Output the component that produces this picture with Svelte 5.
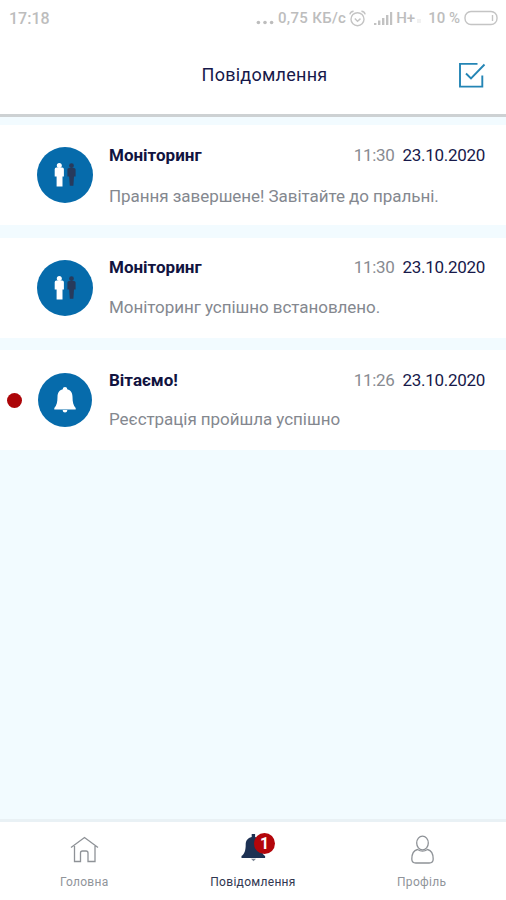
<script>
  const notifications = [
    { icon: 'people', title: 'Моніторинг', time: '11:30', date: '23.10.2020', text: 'Прання завершене! Завітайте до пральні.', unread: false },
    { icon: 'people', title: 'Моніторинг', time: '11:30', date: '23.10.2020', text: 'Моніторинг успішно встановлено.', unread: false },
    { icon: 'bell', title: 'Вітаємо!', time: '11:26', date: '23.10.2020', text: 'Реєстрація пройшла успішно', unread: true }
  ];

  let active = $state('notifications');
  let unreadCount = $derived(notifications.filter((n) => n.unread).length);
</script>

<div class="screen">
  <div class="status">
    <span class="clock">17:18</span>
    <div class="status-right">
      <svg class="dots" width="18" height="5" viewBox="0 0 18 5">
        <circle cx="2.4" cy="2.5" r="1.8" />
        <circle cx="9" cy="2.5" r="1.8" />
        <circle cx="15.6" cy="2.5" r="1.8" />
      </svg>
      <span class="speed">0,75 КБ/с</span>
      <svg class="alarm" width="17" height="17" viewBox="0 0 17 17">
        <circle cx="8.5" cy="9.2" r="6.5" />
        <path d="M.8 4.4Q1.500 1.500 4.600 1.300M16.200 4.400Q15.500 1.500 12.400 1.300M5.800 8.600l2.700 2.600 3-2.600" />
      </svg>
      <svg class="signal" width="20" height="15" viewBox="0 0 20 15">
        <path d="M1 12h2.400v2H1zM5 9.500h2.400V14H5zM9 7h2.400v7H9zM13 4h2.400v10H13zM17 1h2.200v13H17z" />
      </svg>
      <span class="network">H+</span>
      <span class="faint"></span>
      <span class="percent">10 %</span>
      <svg class="battery" width="34" height="16" viewBox="0 0 34 16">
        <rect x="1" y="1.5" width="32" height="13" rx="6" />
        <path d="M28.500 5v6" />
      </svg>
    </div>
  </div>

  <header>
    <h1>Повідомлення</h1>
    <button class="read-all" aria-label="Позначити все прочитаним">
      <svg width="28" height="26" viewBox="0 0 28 26">
        <path d="M19.500 1.900H2v22.700h22.300V13.500" />
        <path d="m8 11.500 5 5L26.500 2.500" />
      </svg>
    </button>
  </header>

  <main>
    {#each notifications as item}
      <article>
        <div class="marker">
          {#if item.unread}<span class="unread"></span>{/if}
        </div>
        <div class="avatar" class:small={item.icon === 'bell'}>
          {#if item.icon === 'people'}
            <svg width="24" height="26" viewBox="0 0 24 26">
              <g fill="#fff">
                <circle cx="6.3" cy="3.4" r="2.500" />
                <path d="M3.300 5.600h6q1.600 0 1.600 1.600v7.400H9.500v9.800H3.600v-9.800H1.700V7.200q0-1.600 1.600-1.600z" />
              </g>
              <g fill="#273a5c">
                <circle cx="18.500" cy="3.700" r="2.400" />
                <path d="M16 5.900h5q1.600 0 1.600 1.600v6.900H21l-.6 9.400h-3.600l-.7-9.400h-1.700V7.500q0-1.600 1.600-1.600z" />
              </g>
            </svg>
          {:else}
            <svg width="24" height="28" viewBox="0 0 24 28">
              <path fill="#fff" d="M12 1c1.300 0 2.200.9 2.200 2.300 3.700.9 5.300 3.800 5.300 7.500 0 5.500.9 8.700 3.200 11.200v1.600H1.300V22c2.300-2.500 3.200-5.700 3.200-11.200 0-3.700 1.600-6.600 5.300-7.500C9.800 1.900 10.700 1 12 1zM9.700 24.100h4.600c0 1.700-1 2.500-2.300 2.500s-2.300-.8-2.300-2.500z" />
            </svg>
          {/if}
        </div>
        <div class="body">
          <div class="line">
            <h2>{item.title}</h2>
            <span class="time">{item.time}</span>
            <span class="date">{item.date}</span>
          </div>
          <p>{item.text}</p>
        </div>
      </article>
    {/each}
  </main>

  <nav>
    <button class:active={active === 'home'} onclick={() => (active = 'home')}>
      <span class="nav-icon">
        <svg width="30" height="30" viewBox="0 0 30 30">
          <path d="M2 13.500 15.500 3.500 29 13.500M5.500 12v15.500h6V19q0-2 2-2h3.500q2 0 2 2v8.500h7V12" />
        </svg>
      </span>
      <span class="label">Головна</span>
    </button>
    <button class:active={active === 'notifications'} onclick={() => (active = 'notifications')}>
      <span class="nav-icon">
        <svg width="30" height="30" viewBox="0 0 30 30">
          <path class="solid" d="M13.700 0h3.400v3c4.200 1 6 4 6 7.500 0 6 1 9.500 4 11.500v2H3.500v-2c3-2 4.200-5.500 4.200-11.500 0-3.500 1.800-6.500 6-7.500z" />
          <path class="clapper" d="M13 24.700h5l-2.500 2.600z" />
        </svg>
        {#if unreadCount}<span class="badge">{unreadCount}</span>{/if}
      </span>
      <span class="label">Повідомлення</span>
    </button>
    <button class:active={active === 'profile'} onclick={() => (active = 'profile')}>
      <span class="nav-icon">
        <svg width="30" height="30" viewBox="0 0 30 30">
          <ellipse cx="15.500" cy="9" rx="5.800" ry="6.800" />
          <path d="M10.500 15.500C6.500 16.500 4.800 20 4.800 25q0 4 4 4h13.400q4 0 4-4c0-5-1.700-8.500-5.700-9.500-3 2-7 2-10 0z" />
        </svg>
      </span>
      <span class="label">Профіль</span>
    </button>
  </nav>
</div>

<style>
  :global(body) {
    margin: 0;
    background: #fff;
  }

  .screen {
    display: flex;
    flex-direction: column;
    height: 900px;
    background: #f2fbff;
    font-family: Roboto, 'Noto Sans', sans-serif;
    color: #17194a;
  }

  button {
    padding: 0;
    border: 0;
    background: none;
    font: inherit;
    cursor: pointer;
  }

  svg {
    display: block;
  }

  .status {
    display: flex;
    justify-content: space-between;
    align-items: center;
    height: 36px;
    padding: 0 8px 0 9px;
    background: #fff;
    color: #bdbdbd;
    font-size: 15px;
    font-weight: 500;
  }

  .clock {
    font-size: 16px;
  }

  .status-right {
    display: flex;
    align-items: center;
  }

  .dots {
    margin: 8px 4px 0 0;
    fill: #bdbdbd;
  }

  .speed {
    letter-spacing: 0.3px;
  }

  .alarm,
  .battery {
    fill: none;
    stroke: #c4c4c4;
    stroke-width: 1.4;
  }

  .alarm {
    margin: 0 7px 0 3px;
  }

  .signal {
    margin-right: 3px;
    fill: #c2c2c2;
  }

  .faint {
    width: 4px;
    height: 4px;
    margin: 5px 7px 0 2px;
    background: #f1f1f1;
  }

  .battery {
    margin-left: 4px;
  }

  header {
    display: grid;
    grid-template-columns: 1fr auto 1fr;
    align-items: center;
    height: 81px;
    padding: 0 20px 0 43px;
    background: #fff;
    border-bottom: 3px solid #cdd1d3;
    box-sizing: border-box;
  }

  h1 {
    grid-column: 2;
    margin: 0 0 2px;
    font-size: 18px;
    font-weight: 400;
    letter-spacing: 0.25px;
  }

  .read-all {
    justify-self: end;
  }

  .read-all svg {
    fill: none;
    stroke: #2485b5;
    stroke-width: 1.9;
  }

  main {
    flex: 1;
    display: flex;
    flex-direction: column;
    gap: 12.500px;
    padding-top: 8px;
  }

  article {
    display: flex;
    height: 100px;
    background: #fff;
  }

  .marker {
    display: flex;
    align-items: center;
    width: 37px;
    padding-left: 7px;
    box-sizing: border-box;
  }

  .unread {
    width: 15px;
    height: 15px;
    border-radius: 50%;
    background: #ac0508;
  }

  .avatar {
    display: flex;
    align-items: center;
    justify-content: center;
    align-self: center;
    width: 56px;
    height: 56px;
    border-radius: 50%;
    background: #066bab;
  }

  .avatar.small {
    width: 54px;
    height: 54px;
    margin: 0 1px;
  }

  .body {
    flex: 1;
    padding: 20px 21px 0 16px;
  }

  .line {
    display: flex;
    align-items: center;
    height: 20px;
    font-size: 17px;
    letter-spacing: -0.3px;
  }

  h2 {
    flex: 1;
    margin: 0;
    font-size: 17px;
    font-weight: 700;
    letter-spacing: 0;
    color: #111340;
  }

  .time {
    margin-right: 8px;
    color: #888b91;
  }

  p {
    margin: 21px 0 0;
    font-size: 17px;
    line-height: 20px;
    letter-spacing: -0.05px;
    color: #84888f;
  }

  article + article .body {
    padding-top: 19.500px;
  }

  article + article p {
    margin-top: 19.500px;
  }

  nav {
    display: grid;
    grid-template-columns: repeat(3, 1fr);
    height: 81px;
    box-sizing: border-box;
    border-top: 3px solid #e9f1f5;
    background: #fff;
  }

  nav button {
    display: flex;
    flex-direction: column;
    align-items: center;
    padding-top: 12px;
    color: #90949a;
  }

  nav button.active {
    color: #303650;
  }

  .nav-icon {
    position: relative;
  }

  .nav-icon svg {
    fill: none;
    stroke: #8e9297;
    stroke-width: 1.3;
  }

  .nav-icon .solid {
    fill: #1d3153;
    stroke: none;
  }

  .nav-icon .clapper {
    fill: #7f8997;
    stroke: none;
  }

  .badge {
    position: absolute;
    top: -1px;
    left: 16px;
    width: 21px;
    height: 21px;
    border-radius: 50%;
    background: #b3060b;
    color: #fff;
    font-size: 16px;
    font-weight: 700;
    line-height: 21px;
    text-align: center;
  }

  .label {
    margin-top: 11px;
    font-size: 12px;
    line-height: 14px;
    letter-spacing: 0.3px;
  }
</style>
